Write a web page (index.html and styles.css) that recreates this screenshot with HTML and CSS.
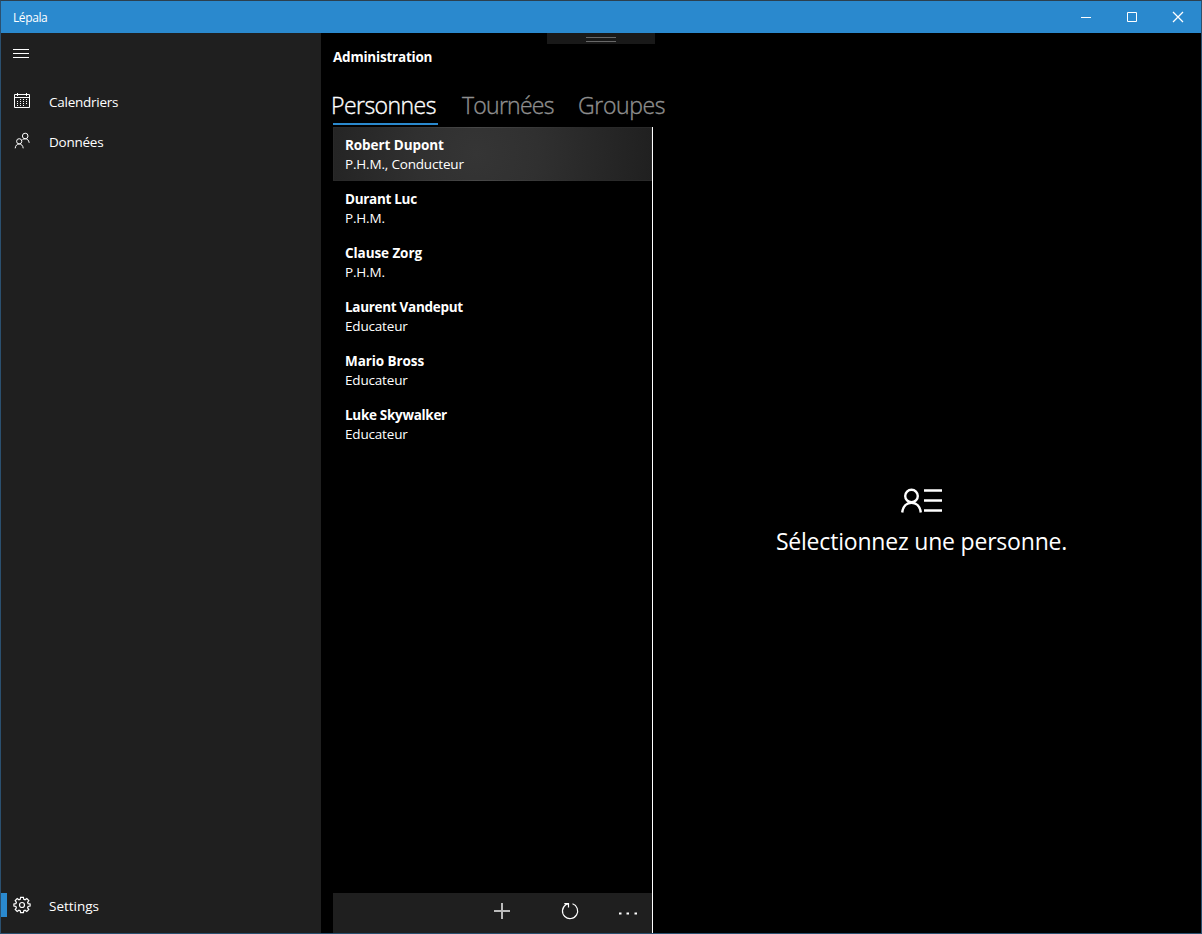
FILE: index.html
```html
<!DOCTYPE html>
<html lang="fr">
<head>
<meta charset="utf-8">
<title>Lépala</title>
<link rel="stylesheet" href="styles.css">
</head>
<body>
<div class="window">
  <header class="titlebar">
    <span class="app-name">Lépala</span>
    <div class="caption-buttons">
      <svg width="46" height="32" viewBox="0 0 46 32"><path d="M18 16.5h10"/></svg>
      <svg width="46" height="32" viewBox="0 0 46 32"><path d="M18.5 11.5h9v9h-9z"/></svg>
      <svg width="46" height="32" viewBox="0 0 46 32"><path class="close" d="M18 11l10 10M28 11l-10 10"/></svg>
    </div>
  </header>
  <div class="workspace">
    <nav class="sidebar">
      <svg class="burger" width="16" height="10" viewBox="0 0 16 10"><path d="M0 .5h16M0 4.5h16M0 8.5h16"/></svg>
      <a class="nav-item">
        <svg class="nav-icon" width="18" height="18" viewBox="0 0 18 18"><path d="M1.500 2.500h15v13h-15zM1.500 5.500h15M4.500 1v3M13.500 1v3"/><path class="dots" d="M7 7.500h8M4 9.500h11M4 11.500h11M4 13.500h8"/></svg>
        <span class="label tight">Calendriers</span>
      </a>
      <a class="nav-item">
        <svg class="nav-icon" width="18" height="18" viewBox="0 0 18 18"><circle cx="6.200" cy="9.300" r="2.600"/><path d="M2.200 16.300c.3-2.800 1.800-4.300 4-4.300s3.700 1.500 4 4.300"/><circle cx="12.200" cy="4" r="2.800"/><path d="M9.400 7.800c.8-.7 1.700-1 2.800-1 2.200 0 3.500 1.300 4 4"/></svg>
        <span class="label tight">Données</span>
      </a>
      <a class="nav-item settings">
        <svg class="nav-icon gear" width="18" height="18" viewBox="0 0 18 18"><circle cx="9" cy="9" r="2.500"/><path d="M7.600 1.300h2.800l.4 2 1.300.5 1.700-1.200 2 2-1.200 1.700.5 1.300 2 .3v2.200l-2 .4-.5 1.300 1.200 1.700-2 2-1.700-1.200-1.300.5-.4 1.900H7.600l-.4-1.900-1.300-.5-1.700 1.200-2-2 1.200-1.700-.5-1.300-2-.4V7.900l2-.3.5-1.300-1.200-1.700 2-2 1.700 1.200 1.300-.5z"/></svg>
        <span class="label">Settings</span>
      </a>
    </nav>
    <main class="content">
      <section class="people">
        <h1 class="page-title">Administration</h1>
        <div class="tabs">
          <span class="tab active">Personnes</span>
          <span class="tab tournees">Tournées</span>
          <span class="tab groupes">Groupes</span>
        </div>
        <div class="list-column">
          <ul class="person-list">
            <li class="person selected"><b class="loose">Robert Dupont</b><span>P.H.M., Conducteur</span></li>
            <li class="person"><b>Durant Luc</b><span>P.H.M.</span></li>
            <li class="person"><b class="loose">Clause Zorg</b><span>P.H.M.</span></li>
            <li class="person"><b>Laurent Vandeput</b><span>Educateur</span></li>
            <li class="person"><b class="loose">Mario Bross</b><span>Educateur</span></li>
            <li class="person"><b>Luke Skywalker</b><span>Educateur</span></li>
          </ul>
          <div class="command-bar">
            <svg width="68" height="40" viewBox="0 0 68 40"><path class="plus" d="M26 18h16M34 10v16"/></svg>
            <svg width="68" height="40" viewBox="0 0 68 40"><path class="refresh" d="M36.500 10.800A7.600 7.600 0 1 1 29.800 11.700L32.400 10.700M28.300 10.600h4.200v4"/></svg>
            <svg width="48" height="40" viewBox="0 0 48 40"><path class="more" d="M15 20.500h2.500M22.500 20.500h2.500M30.500 20.500h2.500"/></svg>
          </div>
        </div>
      </section>
      <section class="detail">
        <svg class="contact-icon" width="42" height="26" viewBox="0 0 42 26"><circle cx="10.500" cy="8" r="6.300"/><path d="M1.200 24.500c.7-6 4.300-9.700 9.300-9.700s8.600 3.700 9.300 9.700M23 2.500h18M23 12.500h18M23 22.500h18"/></svg>
        <p class="hint">Sélectionnez une personne.</p>
      </section>
      <div class="drag-handle"></div>
    </main>
  </div>
</div>
</body>
</html>
```
FILE: styles.css
```css
* { box-sizing: border-box; }
body {
  margin: 0;
  background: #000;
  color: #fff;
  font: 13.5px/19px "Open Sans", "Noto Sans", sans-serif;
}
svg { display: block; fill: none; stroke: #fff; }
.window {
  width: 1202px;
  height: 934px;
  display: flex;
  flex-direction: column;
  border: 1px solid #2b506f;
  border-top-color: #2c3f4e;
}
.titlebar {
  height: 32px;
  flex: none;
  display: flex;
  justify-content: space-between;
  align-items: center;
  padding-left: 12px;
  background: #2a89ce;
}
.app-name { font-size: 12px; letter-spacing: -0.4px; }
.caption-buttons { display: flex; }
.close { stroke-width: 1.3; }
.workspace { flex: 1; min-height: 0; display: flex; }
.sidebar {
  width: 320px;
  flex: none;
  display: flex;
  flex-direction: column;
  padding-bottom: 8px;
  background: #1f1f1f;
}
.burger { margin: 16px 0 22px 12px; flex: none; }
.nav-item { display: flex; align-items: center; height: 40px; padding-left: 12px; }
.nav-icon { margin-right: 18px; }
.label { padding-top: 2px; }
.tight { letter-spacing: -0.25px; }
.dots { stroke-dasharray: 1 2; }
.settings { position: relative; margin-top: auto; }
.settings::before {
  content: "";
  position: absolute;
  left: 0;
  top: 8px;
  width: 6px;
  height: 24px;
  background: #2a89ce;
}
.gear { stroke-width: 1.2; }
.content { position: relative; flex: 1; display: flex; }
.people { width: 332px; flex: none; display: flex; flex-direction: column; padding-left: 12px; }
.page-title { margin: 15px 0 0; font-size: 13.5px; line-height: 19px; letter-spacing: -0.22px; }
.tabs { display: flex; gap: 24px; height: 60px; padding-top: 20px; }
.tab {
  flex: none;
  width: 92px;
  height: 38px;
  color: #8f8f8f;
  font-size: 23px;
  font-weight: 300;
  line-height: 36px;
  white-space: nowrap;
  -webkit-text-stroke: 0.35px;
}
.active {
  width: 105px;
  color: #fff;
  border-bottom: 2px solid #2a89ce;
  letter-spacing: -0.55px;
  text-indent: -2px;
}
.tournees { letter-spacing: -0.75px; }
.groupes { letter-spacing: -0.35px; }
.list-column { flex: 1; display: flex; flex-direction: column; border-right: 1px solid #fff; }
.person-list { flex: 1; margin: 0; padding: 0; list-style: none; }
.person {
  height: 54px;
  padding: 9px 12px 7px;
  display: flex;
  flex-direction: column;
  letter-spacing: -0.18px;
}
.person b { letter-spacing: -0.3px; }
.person .loose { letter-spacing: -0.08px; }
.selected {
  border: 1px solid;
  border-image: linear-gradient(90deg, #292929 10%, #484848 45%, #292929 80%) 1;
  padding: 8px 11px 6px;
  background: radial-gradient(circle at 45% 50%, #353535 0, #303030 35%, #202020 100%);
}
.command-bar { height: 40px; display: flex; justify-content: flex-end; background: #1f1f1f; }
.plus { stroke: #bbb; stroke-width: 2; }
.refresh { stroke-width: 1.2; }
.more { stroke-width: 2; }
.detail { flex: 1; display: flex; flex-direction: column; align-items: center; padding: 455px 11px 0 0; }
.contact-icon { stroke-width: 2.4; }
.hint { margin: 11px 0 0; font-size: 23px; line-height: 32px; letter-spacing: -0.2px; }
.drag-handle {
  position: absolute;
  left: 226px;
  top: 0;
  width: 108px;
  height: 11px;
  padding: 4px 39px;
  background: #191919;
}
.drag-handle::before {
  content: "";
  display: block;
  height: 3px;
  border: solid #686868;
  border-width: 1px 0;
}
```
